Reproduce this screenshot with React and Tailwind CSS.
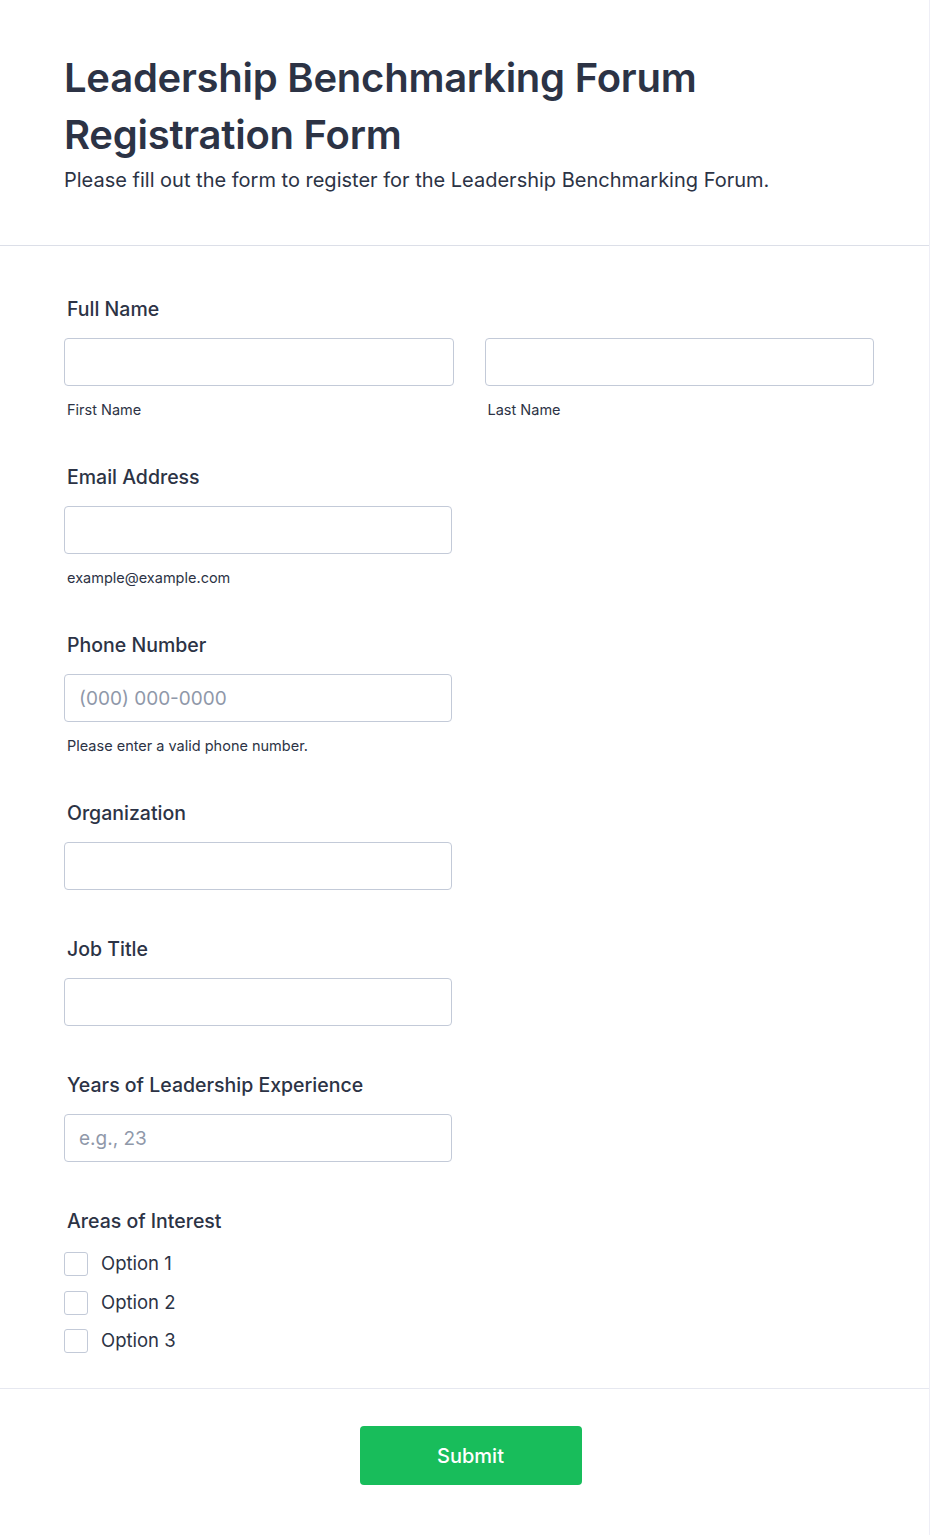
import React from "react";

function Label({ children }) {
  return (
    <div className="h-[28px] pl-[3px] text-[19.5px] leading-[28px] font-medium text-[#2c3345]">
      {children}
    </div>
  );
}

function Sub({ children }) {
  return (
    <div className="mt-[14px] h-[20px] pl-[3px] text-[14.5px] leading-[20px] text-[#2c3345]">
      {children}
    </div>
  );
}

function Input({ placeholder, className = "" }) {
  return (
    <input
      type="text"
      placeholder={placeholder}
      className={
        "mt-[15px] h-[48px] rounded-[4px] border border-[#c3cad8] bg-white px-[14px] text-[19px] text-[#2c3345] outline-none placeholder:text-[#8f98a9] " +
        className
      }
    />
  );
}

export default function App() {
  return (
    <div
      className="w-[930px] min-h-[1535px] bg-white border-r border-[#eeeef6]"
      style={{ fontFamily: "Inter, 'Noto Sans', sans-serif" }}
    >
      {/* Header */}
      <div className="h-[246px] border-b border-[#dcdfe8] px-[64px] pt-[49px]">
        <h1 className="text-[40px] leading-[57px] font-semibold text-[#2c3345] tracking-[-0.25px]">
          Leadership Benchmarking Forum
          <br />
          Registration Form
        </h1>
        <p className="mt-[4px] text-[20px] leading-[26px] text-[#2c3345]">
          Please fill out the form to register for the Leadership Benchmarking Forum.
        </p>
      </div>

      {/* Fields */}
      <div className="h-[1143px] border-b border-[#e6e8f0] pl-[64px] pr-[55px] pt-[49px]">
        <div className="flex flex-col">
          <Label>Full Name</Label>
          <div className="flex gap-[31px]">
            <div className="flex w-[390px] flex-col">
              <Input />
              <Sub>First Name</Sub>
            </div>
            <div className="flex w-[390px] flex-col">
              <Input />
              <Sub>Last Name</Sub>
            </div>
          </div>
        </div>

        <div className="mt-[43px] flex flex-col">
          <Label>Email Address</Label>
          <Input className="w-[388px]" />
          <Sub>example@example.com</Sub>
        </div>

        <div className="mt-[43px] flex flex-col">
          <Label>Phone Number</Label>
          <Input className="w-[388px]" placeholder="(000) 000-0000" />
          <Sub>Please enter a valid phone number.</Sub>
        </div>

        <div className="mt-[43px] flex flex-col">
          <Label>Organization</Label>
          <Input className="w-[388px]" />
        </div>

        <div className="mt-[45px] flex flex-col">
          <Label>Job Title</Label>
          <Input className="w-[388px]" />
        </div>

        <div className="mt-[45px] flex flex-col">
          <Label>Years of Leadership Experience</Label>
          <Input className="w-[388px]" placeholder="e.g., 23" />
        </div>

        <div className="mt-[45px] flex flex-col">
          <Label>Areas of Interest</Label>
          <div className="mt-[17px] flex flex-col gap-[14.5px]">
            {["Option 1", "Option 2", "Option 3"].map((o) => (
              <label key={o} className="flex h-[24px] items-center gap-[13px]">
                <span className="h-[24px] w-[24px] rounded-[3px] border border-[#c3cad8] bg-white" />
                <span className="text-[18.5px] text-[#2c3345]">{o}</span>
              </label>
            ))}
          </div>
        </div>
      </div>

      {/* Submit */}
      <div className="flex justify-center pt-[37px] pb-[50px] pl-[12px]">
        <button className="h-[59px] w-[222px] rounded-[4px] bg-[#18bd5b] text-[20px] font-medium text-white">
          Submit
        </button>
      </div>
    </div>
  );
}
